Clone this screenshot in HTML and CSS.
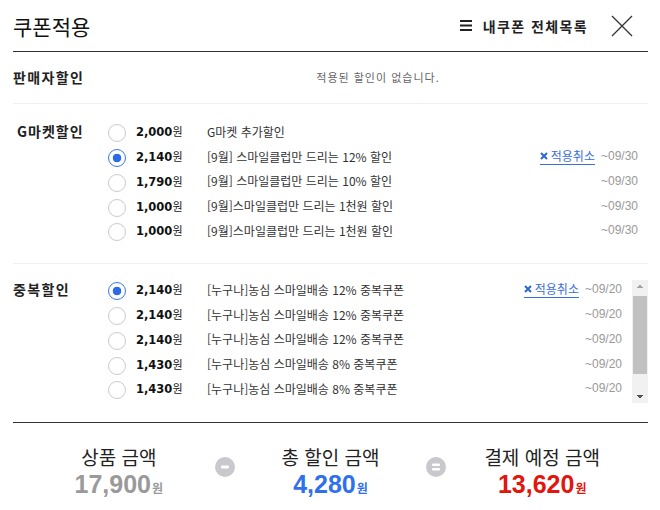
FILE: index.html
```html
<!DOCTYPE html>
<html lang="ko">
<head>
<meta charset="utf-8">
<title>쿠폰적용</title>
<link rel="stylesheet" href="styles.css">
</head>
<body>
<div class="popup">
  <header class="hd">
    <h1 class="title">쿠폰적용</h1>
    <div class="hd-right">
      <a class="all-link" href="#">
        <svg class="menu-ico" width="12" height="11" viewBox="0 0 12 11"><rect x="0" y="0" width="12" height="2" fill="#222"/><rect x="0" y="4.5" width="12" height="2" fill="#222"/><rect x="0" y="9" width="12" height="2" fill="#222"/></svg>
        <span>내쿠폰 전체목록</span>
      </a>
      <button class="close" type="button" aria-label="닫기">
        <svg width="22" height="22" viewBox="0 0 22 22"><path d="M1 1 L21 21 M21 1 L1 21" stroke="#333" stroke-width="1.3" fill="none"/></svg>
      </button>
    </div>
  </header>

  <section class="sec sec-seller">
    <h2 class="sec-label">판매자할인</h2>
    <p class="empty">적용된 할인이 없습니다.</p>
  </section>

  <section class="sec sec-gmarket">
    <h2 class="sec-label list-label">G마켓할인</h2>
    <ul class="list">
      <li class="row"><span class="radio"></span><span class="amt">2,000<span class="won">원</span></span><span class="desc">G마켓 추가할인</span></li>
      <li class="row"><span class="radio on"></span><span class="amt">2,140<span class="won">원</span></span><span class="desc">[9월] 스마일클럽만 드리는 12% 할인</span><a class="cancel" href="#"><svg width="8" height="8" viewBox="0 0 8 8"><path d="M1 1 L7 7 M7 1 L1 7" stroke="#2f66d0" stroke-width="2"/></svg>적용취소</a><span class="date">~09/30</span></li>
      <li class="row"><span class="radio"></span><span class="amt">1,790<span class="won">원</span></span><span class="desc">[9월] 스마일클럽만 드리는 10% 할인</span><span class="date">~09/30</span></li>
      <li class="row"><span class="radio"></span><span class="amt">1,000<span class="won">원</span></span><span class="desc">[9월]스마일클럽만 드리는 1천원 할인</span><span class="date">~09/30</span></li>
      <li class="row"><span class="radio"></span><span class="amt">1,000<span class="won">원</span></span><span class="desc">[9월]스마일클럽만 드리는 1천원 할인</span><span class="date">~09/30</span></li>
    </ul>
  </section>

  <section class="sec sec-dup">
    <h2 class="sec-label list-label">중복할인</h2>
    <ul class="list">
      <li class="row"><span class="radio on"></span><span class="amt">2,140<span class="won">원</span></span><span class="desc">[누구나]농심 스마일배송 12% 중복쿠폰</span><a class="cancel" href="#"><svg width="8" height="8" viewBox="0 0 8 8"><path d="M1 1 L7 7 M7 1 L1 7" stroke="#2f66d0" stroke-width="2"/></svg>적용취소</a><span class="date">~09/20</span></li>
      <li class="row"><span class="radio"></span><span class="amt">2,140<span class="won">원</span></span><span class="desc">[누구나]농심 스마일배송 12% 중복쿠폰</span><span class="date">~09/20</span></li>
      <li class="row"><span class="radio"></span><span class="amt">2,140<span class="won">원</span></span><span class="desc">[누구나]농심 스마일배송 12% 중복쿠폰</span><span class="date">~09/20</span></li>
      <li class="row"><span class="radio"></span><span class="amt">1,430<span class="won">원</span></span><span class="desc">[누구나]농심 스마일배송 8% 중복쿠폰</span><span class="date">~09/20</span></li>
      <li class="row"><span class="radio"></span><span class="amt">1,430<span class="won">원</span></span><span class="desc">[누구나]농심 스마일배송 8% 중복쿠폰</span><span class="date">~09/20</span></li>
    </ul>
    <div class="vscroll" aria-hidden="true">
      <span class="sb-btn sb-up"></span>
      <span class="sb-track"><span class="sb-thumb"></span></span>
      <span class="sb-btn sb-down"></span>
    </div>
  </section>

  <div class="summary">
    <div class="sum-col">
      <div class="sum-label">상품 금액</div>
      <div class="sum-val gray">17,900<span class="won-s">원</span></div>
    </div>
    <div class="op">
      <svg width="20" height="20" viewBox="0 0 20 20"><circle cx="10" cy="10" r="10" fill="#c9c9cd"/><rect x="6" y="8.5" width="8" height="3" rx="1" fill="#fff"/></svg>
    </div>
    <div class="sum-col">
      <div class="sum-label">총 할인 금액</div>
      <div class="sum-val blue">4,280<span class="won-s">원</span></div>
    </div>
    <div class="op">
      <svg width="20" height="20" viewBox="0 0 20 20"><circle cx="10" cy="10" r="10" fill="#c9c9cd"/><rect x="6" y="6.5" width="8" height="2.5" rx="1" fill="#fff"/><rect x="6" y="11" width="8" height="2.5" rx="1" fill="#fff"/></svg>
    </div>
    <div class="sum-col">
      <div class="sum-label">결제 예정 금액</div>
      <div class="sum-val red">13,620<span class="won-s">원</span></div>
    </div>
  </div>
</div>
</body>
</html>
```

FILE: styles.css
```css
* {
  box-sizing: border-box;
  margin: 0;
  padding: 0;
}

body {
  margin: 0;
  background: #fff;
  font-family: "Noto Sans CJK KR", "Noto Sans", sans-serif;
  color: #222;
}

.popup {
  width: 660px;
  height: 510px;
  padding: 0 12px 0 13px;
  overflow: hidden;
}

/* header */
.hd {
  height: 52px;
  border-bottom: 1px solid #333;
  display: flex;
  align-items: center;
  justify-content: space-between;
}

.title {
  font-size: 21px;
  font-weight: 400;
  letter-spacing: 0;
  line-height: 26px;
  color: #111;
}

.hd-right {
  display: flex;
  align-items: center;
}

.all-link {
  display: flex;
  align-items: center;
  gap: 11px;
  font-size: 14px;
  font-weight: 700;
  letter-spacing: 1.4px;
  color: #222;
  text-decoration: none;
  line-height: 20px;
}

.close {
  margin-left: 23px;
  margin-right: 15px;
  border: 0;
  background: none;
  width: 22px;
  height: 22px;
  display: flex;
}

/* sections */
.sec {
  display: flex;
  border-bottom: 1px solid #efefef;
}

.sec-label {
  width: 95px;
  flex: none;
  font-size: 14px;
  font-weight: 700;
  letter-spacing: 1.4px;
  line-height: 17px;
  color: #222;
}

.list-label {
  line-height: 20px;
}

.sec-gmarket .list-label {
  padding-left: 4px;
  letter-spacing: 1px;
}

.sec-seller {
  padding: 17px 0;
}

.empty {
  flex: 1;
  text-align: center;
  font-size: 11px;
  letter-spacing: 1px;
  line-height: 17px;
  color: #666;
}

.sec-gmarket {
  padding: 17px 0 18.25px;
}

.sec-dup {
  padding: 15px 0 19.25px;
  border-bottom: none;
}

.list {
  flex: 1;
  list-style: none;
  min-width: 0;
}

.row {
  display: flex;
  align-items: center;
  height: 24.75px;
  padding-right: 10px;
  white-space: nowrap;
}

.row > span:not(.radio),
.row > a {
  margin-bottom: 4px;
}

.radio {
  width: 18px;
  height: 18px;
  flex: none;
  border: 1px solid #cbcbcb;
  border-radius: 50%;
  background: #fff;
}

.radio.on {
  border-color: #3a78e6;
  background: radial-gradient(circle, #2c6ae8 0 4px, #fff 4.6px);
}

.amt {
  width: 71px;
  flex: none;
  margin-left: 10px;
  font-family: "DejaVu Sans", sans-serif;
  font-weight: 700;
  font-size: 11.5px;
  color: #111;
}

.won {
  font-family: "Noto Sans CJK KR", sans-serif;
  font-size: 11px;
  font-weight: 400;
  color: #222;
}

.desc {
  flex: 1;
  font-size: 12px;
  color: #333;
  overflow: hidden;
}

.cancel {
  display: flex;
  align-items: center;
  gap: 3px;
  font-size: 12px;
  line-height: 16px;
  color: #3a6fd8;
  text-decoration: none;
  border-bottom: 1px solid #3a6fd8;
  margin-right: 6px;
}

.date {
  font-family: "Liberation Sans", sans-serif;
  font-size: 12px;
  color: #999;
}

/* scrollbar of the 중복할인 list */
.vscroll {
  width: 16px;
  flex: none;
  display: flex;
  flex-direction: column;
  background: #f1f1f1;
  margin-top: 1px;
}

.sb-btn {
  height: 16px;
  flex: none;
  background-repeat: no-repeat;
}

.sb-up {
  background-image:
    linear-gradient(to bottom right, transparent 50%, #a3a3a3 50%),
    linear-gradient(to bottom left, transparent 50%, #a3a3a3 50%);
  background-size: 4px 3px, 4px 3px;
  background-position: 4px 5px, 8px 5px;
}

.sb-down {
  background-image:
    linear-gradient(to top right, transparent 50%, #505050 50%),
    linear-gradient(to top left, transparent 50%, #505050 50%);
  background-size: 4px 3px, 4px 3px;
  background-position: 4px 8px, 8px 8px;
}

.sb-track {
  flex: 1;
  display: flex;
  flex-direction: column;
}

.sb-thumb {
  height: 78px;
  margin: 0 1px;
  background: #c1c1c1;
}

/* summary */
.summary {
  border-top: 1px solid #333;
  display: grid;
  grid-template-columns: 1fr 0 1fr 0 1fr;
  padding-top: 21px;
}

.sum-col {
  text-align: center;
}

.sum-label {
  font-size: 19px;
  line-height: 26px;
  color: #222;
}

.sum-val {
  font-family: "Liberation Sans", sans-serif;
  font-weight: 700;
  font-size: 25px;
  line-height: 28px;
}

.won-s {
  font-family: "Noto Sans CJK KR", sans-serif;
  font-size: 12px;
  font-weight: 700;
  margin-left: 1px;
}

.gray { color: #9a9a9a; }
.blue { color: #2f70ee; }
.red { color: #e3150c; }

.op {
  display: flex;
  justify-content: center;
  margin-top: 13px;
}

.op svg {
  flex: none;
}
```
